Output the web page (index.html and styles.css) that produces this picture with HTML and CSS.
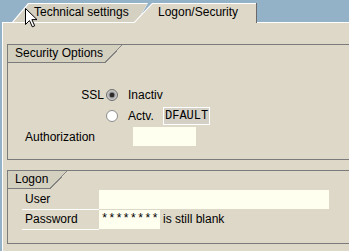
FILE: index.html
```html
<!DOCTYPE html>
<html>
<head>
<meta charset="utf-8">
<link rel="stylesheet" href="styles.css">
</head>
<body>
<div class="window">
  <div class="tabs">
    <div class="tab">Technical settings</div>
    <div class="tab active">Logon/Security</div>
  </div>
  <div class="panel">
    <section class="group sec">
      <div class="gh"><span class="gh-text">Security Options</span><span class="gh-slant"></span></div>
      <div class="rows">
        <div class="row"><span class="lbl r">SSL</span><span class="radio on"></span><span class="opt">Inactiv</span></div>
        <div class="row"><span class="lbl r"></span><span class="radio"></span><span class="opt w">Actv.</span><span class="code">DFAULT</span></div>
        <div class="row"><span class="lbl wide">Authorization</span><span class="field auth"></span></div>
      </div>
    </section>
    <section class="group logon">
      <div class="gh"><span class="gh-text">Logon</span><span class="gh-slant"></span></div>
      <div class="lrows">
        <div class="lrow"><span class="llbl">User</span><span class="field user"></span></div>
        <div class="lrow"><span class="llbl">Password</span><span class="field pw">********</span><span class="note">is still blank</span></div>
      </div>
    </section>
  </div>
  <svg class="cursor" width="13" height="20" viewBox="0 0 13 20"><path d="M0.5 0.5 V16.5 L4.5 12.6 L7.3 18.8 L9.7 17.8 L6.9 11.6 H12 Z" fill="#fff" stroke="#000" stroke-width="1" stroke-linejoin="miter"/></svg>
</div>
</body>
</html>
```
FILE: styles.css
```css
html, body {
  margin: 0;
  padding: 0;
  overflow: hidden;
}
body {
  background: #93b1c7;
  font-family: "Liberation Sans", Arial, sans-serif;
  font-size: 12px;
  color: #000;
}
.window {
  position: relative;
  width: 349px;
  height: 251px;
}
.tabs {
  display: flex;
  align-items: flex-start;
  height: 19px;
  padding: 3px 0 0 12px;
}
.tab {
  position: relative;
  z-index: 1;
  width: 136px;
  height: 19px;
  line-height: 19px;
  padding-left: 22px;
  box-sizing: border-box;
  white-space: nowrap;
}
.tab::before,
.tab::after {
  content: "";
  position: absolute;
  inset: 0;
  z-index: -1;
}
.tab::before {
  background: #fff;
  clip-path: polygon(0 100%, 16px 0, 100% 0, calc(100% - 11px) 100%);
}
.tab::after {
  background: #d4d0c2;
  clip-path: polygon(1.5px 100%, 16.8px 1px, calc(100% - 0.8px) 1px, calc(100% - 11.5px) 100%);
}
.tab.active {
  z-index: 2;
  width: 124px;
  height: 20px;
  margin-left: -15px;
  margin-bottom: -1px;
  padding-left: 25px;
}
.tab.active::before {
  background: linear-gradient(to left, #6a6a6a 1px, #fff 1px);
  clip-path: polygon(0 100%, 19px 0, 100% 0, 100% 100%);
}
.tab.active::after {
  background: #ded8c8;
  clip-path: polygon(1.5px 100%, 19.5px 1px, calc(100% - 1px) 1px, calc(100% - 1px) 100%);
}
.panel {
  margin-left: 2px;
  height: 229px;
  box-sizing: border-box;
  border-top: 1px solid #fff;
  border-left: 1px solid #fff;
  background: #ded8c8;
  padding: 21px 0 0 4px;
}
.group {
  border: 1px solid #7b7b7b;
  border-right: 0;
}
.group.logon {
  margin-top: 10px;
}
.gh {
  display: flex;
  height: 18px;
}
.gh-text {
  height: 17px;
  line-height: 17px;
  padding: 0 2px 0 7px;
  background: #d4d0c0;
  border-bottom: 1px solid #7b7b7b;
  white-space: nowrap;
}
.gh-slant {
  width: 17px;
  height: 18px;
  background: linear-gradient(to bottom right, #d4d0c0 calc(50% - 0.7px), #858585 calc(50% - 0.7px), #858585 calc(50% + 0.5px), transparent calc(50% + 0.5px));
}
.rows {
  padding: 21px 0 12px 17px;
}
.row {
  display: flex;
  align-items: center;
  height: 21px;
}
.lbl.r {
  width: 79px;
  text-align: right;
}
.lbl.wide {
  width: 108px;
}
.radio {
  width: 12px;
  height: 12px;
  box-sizing: border-box;
  margin: 0 10px 0 2px;
  border-radius: 50%;
  border: 1px solid #8c8c8c;
  background: #fff;
}
.radio.on {
  border-color: #6e6e6e;
  background: radial-gradient(circle, #2a2a2a 0 2px, #8a8a8a 2.6px, #c4c4c4 4px, #dcdcdc 100%);
}
.opt.w {
  width: 35px;
}
.code {
  height: 18px;
  box-sizing: border-box;
  border: 1px solid #fff;
  background: #d4d0c6;
  font-family: "Liberation Mono", "Courier New", monospace;
  font-size: 12px;
  line-height: 16px;
  padding: 0 1px;
}
.field {
  display: block;
  height: 19px;
  background: #fffff0;
  box-sizing: border-box;
}
.field.auth {
  width: 63px;
}
.lrows {
  padding: 1px 0 13px 14px;
}
.lrow {
  display: flex;
  height: 20px;
}
.llbl {
  width: 77px;
  height: 20px;
  box-sizing: border-box;
  padding-left: 3px;
  line-height: 19px;
  border-bottom: 1px solid #fff;
}
.field.user {
  width: 230px;
}
.field.pw {
  width: 61px;
  padding-left: 2px;
  font-family: "Liberation Mono", "Courier New", monospace;
  font-size: 12px;
  line-height: 19px;
}
.note {
  margin-left: 3px;
  line-height: 19px;
  white-space: nowrap;
}
.cursor {
  position: absolute;
  z-index: 10;
  left: 25px;
  top: 8px;
}
```
